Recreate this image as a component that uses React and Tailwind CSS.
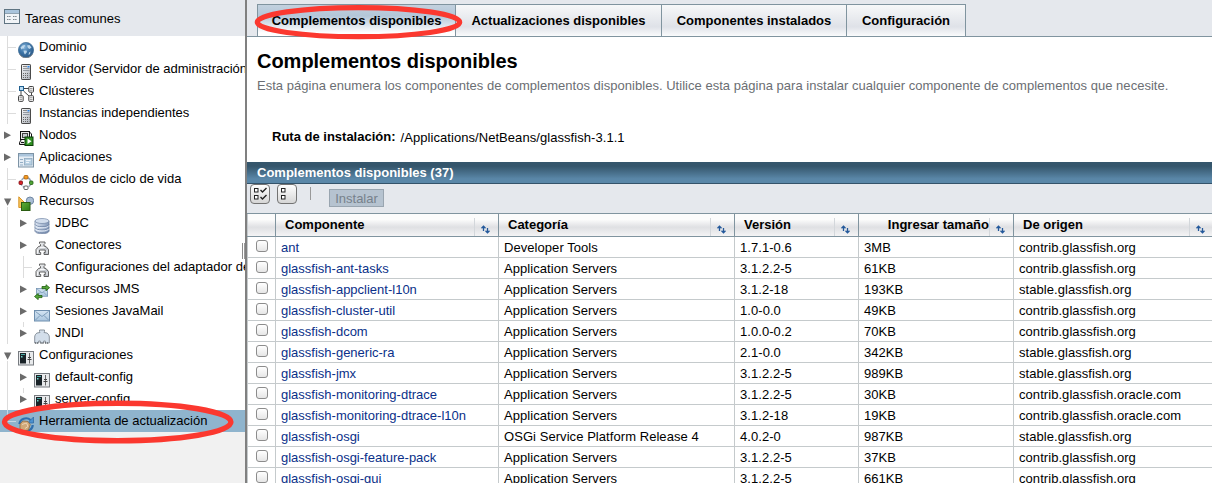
import React from "react";

const Svg = ({ children }) => (
  <svg width="16" height="16" viewBox="0 0 16 16" className="block shrink-0">
    {children}
  </svg>
);

const Gradients = () => (
  <svg width="0" height="0" className="absolute">
    <defs>
      <radialGradient id="globe" cx="0.4" cy="0.3" r="0.75">
        <stop offset="0" stopColor="#7fb0d8" />
        <stop offset="0.5" stopColor="#3f76a8" />
        <stop offset="1" stopColor="#2a5682" />
      </radialGradient>
      <linearGradient id="steel" x1="0" y1="0" x2="1" y2="1">
        <stop offset="0" stopColor="#fafafa" />
        <stop offset="1" stopColor="#a9afb8" />
      </linearGradient>
      <linearGradient id="disk" x1="0" y1="0" x2="1" y2="0">
        <stop offset="0" stopColor="#dfe8f4" />
        <stop offset="1" stopColor="#8297b8" />
      </linearGradient>
      <linearGradient id="mail" x1="0" y1="0" x2="0" y2="1">
        <stop offset="0" stopColor="#d5e5f3" />
        <stop offset="1" stopColor="#a9c5de" />
      </linearGradient>
      <linearGradient id="leaf" x1="0" y1="0" x2="1" y2="1">
        <stop offset="0" stopColor="#5fae38" />
        <stop offset="1" stopColor="#2c7a14" />
      </linearGradient>
    </defs>
  </svg>
);

const WindowIcon = () => (
  <Svg>
    <rect x="0.5" y="0.5" width="15" height="14" fill="#f1f4f7" stroke="#5f7482" />
    <rect x="1" y="1" width="14" height="3" fill="#a9c4dc" />
    <path d="M1 4.5H15" stroke="#8fa3b2" />
    <path d="M3 7.5h4M3 10.5h4M9 7.5h4M9 10.5h4" stroke="#7d8890" strokeDasharray="1.5 0.6" />
  </Svg>
);

const GlobeIcon = () => (
  <Svg>
    <circle cx="8" cy="8" r="7.6" fill="url(#globe)" stroke="#3b6a94" strokeWidth="0.7" />
    <path d="M2.500 5.500l2-2 2-.5 1 1-1.500 1 .5 1.500-2 0-1 1zM9 3.500l2.500-.5 2 2.500-2 1.500-1.500-1zM5.500 8.500l3 0 .5 1.500-2 2.500-1-1.500zM11 10.500l1.500-1-.5 2.500-1.500 1z" fill="#cfe3f2" opacity="0.85" />
    <path d="M1.500 12.200a7.600 7.600 0 0 0 13 0" fill="none" stroke="#777" strokeWidth="0.8" />
  </Svg>
);

const ServerIcon = () => (
  <Svg>
    <rect x="3.500" y="0.500" width="9" height="15" rx="0.600" fill="url(#steel)" stroke="#4a4a4a" />
    <path d="M5 2.500h4" stroke="#888" />
    <rect x="9.500" y="2" width="2" height="1.500" fill="#2f86e8" />
    <path d="M5 4.500h6.500M5 6.500h6.500" stroke="#9298a0" />
    <path d="M5.500 9v5M7.500 9v5M9.500 9v5" stroke="#666" strokeDasharray="1 1" />
    <path d="M11.500 9v5" stroke="#999" strokeDasharray="1 1" />
  </Svg>
);

const ClusterIcon = () => (
  <Svg>
    <path d="M5.500 2.500h5.500M3 5v5M5.500 5l5.500 5M13.500 6.500v3" stroke="#444" fill="none" />
    <rect x="1.500" y="0.500" width="4" height="4" fill="#b9dcf3" stroke="#1f5f8f" />
    <rect x="10.800" y="0.500" width="4.700" height="5.700" rx="0.800" fill="#f3f3f3" stroke="#444" />
    <rect x="0.500" y="9.700" width="4.700" height="5.700" rx="0.800" fill="#f3f3f3" stroke="#444" />
    <rect x="10.800" y="9.700" width="4.700" height="5.700" rx="0.800" fill="#f3f3f3" stroke="#444" />
    <path d="M12 2.500h2.500M12 4.300h2.500M1.600 11.700h2.500M12 11.700h2.500M1.600 13.500h2.500M12 13.500h2.500" stroke="#777" strokeWidth="0.700" />
  </Svg>
);

const NodeIcon = () => (
  <Svg>
    <rect x="2.500" y="1.500" width="9" height="8" fill="#e9e9e9" stroke="#111" />
    <rect x="4.500" y="3.500" width="5" height="4" fill="#c9ccd2" stroke="#444" />
    <path d="M3 10L1.500 12.500V14.500H9" fill="#ddd" stroke="#111" />
    <path d="M11.500 2l2 2v3" fill="none" stroke="#111" />
    <rect x="7" y="7" width="8" height="8.500" fill="#2f8f22" stroke="#0d3f08" />
    <path d="M9.500 8.500v5.500l4-2.750z" fill="#fff" />
    <path d="M3 12.500h3" stroke="#111" />
  </Svg>
);

const AppIcon = () => (
  <Svg>
    <rect x="0.500" y="1.500" width="15" height="13.500" fill="#e4ecf4" stroke="#7d93a5" />
    <rect x="1" y="2" width="14" height="2.500" fill="#abc5dc" />
    <path d="M2 7.500h3M2 10.500h3M2 13h3" stroke="#93aec5" />
    <rect x="6.500" y="6.500" width="7.500" height="6.500" fill="#b8d0e3" stroke="#8faabf" strokeWidth="0.800" />
    <path d="M8 8.500h4.500M8 10.500h3" stroke="#eef4f9" />
  </Svg>
);

const LifecycleIcon = () => (
  <Svg>
    <circle cx="8" cy="8.500" r="5" fill="none" stroke="#93a3b8" strokeWidth="1.600" strokeDasharray="5 1" />
    <rect x="6" y="1.500" width="4" height="3.500" rx="1" fill="#f59a23" stroke="#a85f08" strokeWidth="0.800" />
    <rect x="1" y="7" width="3.500" height="3.500" rx="1" fill="#d8232a" stroke="#7d1014" strokeWidth="0.800" />
    <rect x="11.500" y="7" width="3.500" height="3.500" rx="1" fill="#4fa338" stroke="#22600f" strokeWidth="0.800" />
    <rect x="6" y="12" width="4" height="3.500" rx="1" fill="#fff" stroke="#555" strokeWidth="0.900" />
  </Svg>
);

const ResourcesIcon = () => (
  <Svg>
    <path d="M0.800 0.800L8 8V11.500H0.800z" fill="#f6c45b" stroke="#d9962a" />
    <circle cx="12" cy="4.700" r="3.700" fill="#a9bdd4" stroke="#6f86a3" />
    <rect x="3.500" y="6.500" width="8.500" height="8" fill="url(#leaf)" stroke="#2b5d12" />
  </Svg>
);

const DatabaseIcon = () => (
  <Svg>
    <path d="M1 3v10c0 1.600 3 2.700 7 2.700s7-1.100 7-2.700V3z" fill="url(#disk)" stroke="#65799a" strokeWidth="0.700" />
    <ellipse cx="8" cy="3" rx="7" ry="2.500" fill="#d3deed" stroke="#7488a8" strokeWidth="0.700" />
    <path d="M1 6.500c1 3 13 3 14 0M1 9.700c1 3 13 3 14 0M1 12.500c1 3 13 3 14 0" fill="none" stroke="#6f85a6" strokeWidth="0.900" />
    <path d="M1 7.500c1 3 13 3 14 0M1 10.700c1 3 13 3 14 0" fill="none" stroke="#eef4fc" strokeWidth="0.800" />
  </Svg>
);

const ConnectorIcon = () => (
  <Svg>
    <path d="M6.500 6V4.500L5.500 3.500V2h5.500V3.500L10 4.500V6l2 .5L14.500 9.500V14.500H10V12.500h1.200V10h-5.700v2.500H6.700v2H2V9.500L4.500 6.500z" fill="url(#steel)" stroke="#555" strokeWidth="0.900" />
    <path d="M6 7.500h5M3.500 10v3.500M13 10v3.500" stroke="#fff" strokeWidth="0.800" />
  </Svg>
);

const Envelope = () => (
  <>
    <rect x="0.500" y="4.500" width="15" height="10.500" fill="url(#mail)" stroke="#6f8fae" />
    <path d="M1.500 5.500L8 10.500l6.500-5M1.500 14L6 9.500M14.500 14L10 9.500" fill="none" stroke="#7695b3" strokeWidth="0.900" />
  </>
);

const JmsIcon = () => (
  <Svg>
    <g transform="translate(2 1) scale(0.75)"><Envelope /></g>
    <path d="M8 2.500h4V0.700L15.600 3.700 12 6.700V4.700H8z" fill="#55a63a" stroke="#205e0c" strokeWidth="0.800" />
    <path d="M8 11.500H4.200V9.500L0.500 12.500 4.200 15.600v-2H8z" fill="#55a63a" stroke="#205e0c" strokeWidth="0.800" />
  </Svg>
);

const MailIcon = () => (<Svg><Envelope /></Svg>);

const JndiIcon = () => (
  <Svg>
    <path d="M6 4.500L5.500 3.500V2h5V3.500L10 4.500l3 .5c1.500 1 2.300 2.500 2.300 4V15h-4v-2H9.700v2H6.300v-2H4.700v2H0.700V9c0-1.500.8-3 2.300-4z" fill="#d3deea" stroke="#808a94" strokeWidth="0.900" />
    <path d="M1 15h4M6.500 15h3M11 15h4" stroke="#444" strokeDasharray="1 1" />
  </Svg>
);

const ConfigIcon = () => (
  <Svg>
    <rect x="0.500" y="1.500" width="15" height="13.500" fill="#e8eaec" stroke="#777b80" />
    <rect x="2" y="3" width="6" height="10.500" fill="#1a2328" />
    <path d="M3 4.500h4" stroke="#47a9a3" />
    <rect x="3" y="6" width="1.500" height="1.500" fill="#6dd5cb" />
    <path d="M11.500 3v10.500" stroke="#666" />
    <path d="M9.500 9.500h4M10 7.500h3" stroke="#444" />
  </Svg>
);

const UpdateIcon = () => (
  <Svg>
    <path d="M1.500 8A6.500 6 0 0 1 12.500 4" fill="none" stroke="#2e6fae" strokeWidth="2.200" />
    <path d="M15.500 1V7H9.500z" fill="#4b90cf" stroke="#225b93" strokeWidth="0.600" />
    <path d="M14.700 9A6.500 6 0 0 1 6 14.700" fill="none" stroke="#2e6fae" strokeWidth="2.200" />
    <path d="M2 8l3-3 5 .5 2.200 3-1.700 5.500-4.500 1-4-2z" fill="#d0a878" stroke="#8f6a3f" strokeWidth="0.800" />
    <path d="M4 8.500l4.500-1.500 1.500 3.500-3 2" fill="none" stroke="#ecd5b5" />
  </Svg>
);

const TREE = [
  { t: "Dominio", i: GlobeIcon },
  { t: "servidor (Servidor de administración)", i: ServerIcon },
  { t: "Clústeres", i: ClusterIcon },
  { t: "Instancias independientes", i: ServerIcon },
  { t: "Nodos", i: NodeIcon, a: "r" },
  { t: "Aplicaciones", i: AppIcon, a: "r" },
  { t: "Módulos de ciclo de vida", i: LifecycleIcon },
  { t: "Recursos", i: ResourcesIcon, a: "d" },
  { t: "JDBC", i: DatabaseIcon, a: "r", n: 1 },
  { t: "Conectores", i: ConnectorIcon, a: "r", n: 1 },
  { t: "Configuraciones del adaptador de recursos", i: ConnectorIcon, n: 1 },
  { t: "Recursos JMS", i: JmsIcon, a: "r", n: 1 },
  { t: "Sesiones JavaMail", i: MailIcon, a: "r", n: 1 },
  { t: "JNDI", i: JndiIcon, a: "r", n: 1, stub: 1 },
  { t: "Configuraciones", i: ConfigIcon, a: "d" },
  { t: "default-config", i: ConfigIcon, a: "r", n: 1 },
  { t: "server-config", i: ConfigIcon, a: "r", n: 1, stub: 1 },
  { t: "Herramienta de actualización", i: UpdateIcon, sel: 1 },
];

function Guide({ arrow, stub, last }) {
  return (
    <svg width="16" height="22" viewBox="0 0 16 22" className="block shrink-0">
      {!arrow && <path d={last ? "M7.500 0V11.500H16" : "M7.500 0V22M7.500 11.500H16"} fill="none" stroke={last ? "#c4d8e6" : "#dcdcdc"} />}
      {stub && <path d="M7.500 0V5" stroke="#dcdcdc" />}
      {arrow === "r" && <path d="M4 7.500L11 11.200 4 15z" fill="#6b6b6b" />}
      {arrow === "d" && <path d="M4 8.500H11.300L7.650 15.700z" fill="#6b6b6b" />}
      {arrow === "d" && <path d="M7.500 17V22" stroke="#dcdcdc" />}
    </svg>
  );
}

function TreeRow({ t, i: Icon, a, n, stub, sel }) {
  return (
    <div className={`flex h-[22px] overflow-hidden ${sel ? "bg-[#8fb4cd]" : "bg-white"}`}>
      {n && (
        <svg width="16" height="22" className="block shrink-0">
          <path d="M7.500 0V22" stroke="#dcdcdc" />
        </svg>
      )}
      <Guide arrow={a} stub={stub} last={sel} />
      <div className="shrink-0 pt-1.5 pr-[5px] pl-0.5"><Icon /></div>
      <span className="leading-[22px] whitespace-nowrap">{t}</span>
    </div>
  );
}

const ROWS = [
  ["ant", "Developer Tools", "1.7.1-0.6", "3MB", "contrib.glassfish.org"],
  ["glassfish-ant-tasks", "Application Servers", "3.1.2.2-5", "61KB", "contrib.glassfish.org"],
  ["glassfish-appclient-l10n", "Application Servers", "3.1.2-18", "193KB", "stable.glassfish.org"],
  ["glassfish-cluster-util", "Application Servers", "1.0-0.0", "49KB", "contrib.glassfish.org"],
  ["glassfish-dcom", "Application Servers", "1.0.0-0.2", "70KB", "contrib.glassfish.org"],
  ["glassfish-generic-ra", "Application Servers", "2.1-0.0", "342KB", "stable.glassfish.org"],
  ["glassfish-jmx", "Application Servers", "3.1.2.2-5", "989KB", "stable.glassfish.org"],
  ["glassfish-monitoring-dtrace", "Application Servers", "3.1.2.2-5", "30KB", "contrib.glassfish.oracle.com"],
  ["glassfish-monitoring-dtrace-l10n", "Application Servers", "3.1.2-18", "19KB", "contrib.glassfish.oracle.com"],
  ["glassfish-osgi", "OSGi Service Platform Release 4", "4.0.2-0", "987KB", "stable.glassfish.org"],
  ["glassfish-osgi-feature-pack", "Application Servers", "3.1.2.2-5", "37KB", "contrib.glassfish.org"],
  ["glassfish-osgi-gui", "Application Servers", "3.1.2.2-5", "661KB", "contrib.glassfish.org"],
];

const COLS = "grid grid-cols-[29px_223px_236px_124px_155px_198px]";

const SortIcon = () => (
  <svg width="9" height="9" viewBox="0 0 9 9" className="block">
    <path d="M2.500 1V6M0.500 3.200L2.500 1.200 4.500 3.200M6.500 3V8M4.500 5.800L6.500 7.800 8.500 5.800" fill="none" stroke="#24599b" strokeWidth="1.300" />
  </svg>
);

function HeadCell({ children, right }) {
  return (
    <div className="flex border-r border-[#80949f]">
      <div className={`flex-1 leading-[22px] ${right ? "text-right" : "pl-[9px]"}`}>{children}</div>
      <div className="mt-1 w-6 shrink-0 border-l border-[#d3d7db] pt-[7px] pl-1.5"><SortIcon /></div>
    </div>
  );
}

const TABS = [
  ["Complementos disponibles", "w-[198px]"],
  ["Actualizaciones disponibles", "w-[206px]"],
  ["Componentes instalados", "w-[185px]"],
  ["Configuración", "w-[119px]"],
];

const ToolButton = ({ all }) => (
  <div className="h-5 w-5 rounded-[4px] border border-[#737373] bg-linear-to-b from-white to-[#d6d6d6]">
    <svg width="18" height="18" viewBox="0 0 18 18" className="block">
      <rect x="3.500" y="3.500" width="3.500" height="3.500" fill="#fff" stroke="#222" />
      <rect x="3.500" y="10.500" width="3.500" height="3.500" fill="#fff" stroke="#222" />
      {all && <path d="M9.500 5l2 2 4-4M9.500 12l2 2 4-4" fill="none" stroke="#222" strokeWidth="1.400" />}
    </svg>
  </div>
);

export default function App() {
  return (
    <div className="relative flex h-[483px] w-[1212px] overflow-hidden bg-white font-['Liberation_Sans',Arial,sans-serif] text-[13px] text-black">
      <Gradients />
      <aside className="w-[245px] shrink-0 overflow-hidden bg-[#f1f1f1]">
        <div className="flex h-9 bg-[#e5e8ed] pt-[9px] pl-1">
          <WindowIcon />
          <span className="pl-[5px] leading-[19px]">Tareas comunes</span>
        </div>
        {TREE.map((r) => <TreeRow key={r.t} {...r} />)}
      </aside>
      <div className="w-0.5 shrink-0 bg-[#808080]" />
      <div className="absolute top-[243px] left-[242px] flex h-4 gap-px bg-white">
        <div className="w-px bg-[#8b8b8b]" />
        <div className="w-px bg-[#999]" />
      </div>

      <main className="w-[965px] shrink-0 overflow-hidden">
        <div className="flex h-[37px] border-b border-[#80949f] bg-[#e5e8ed] pt-1 pl-2.5">
          <nav className="flex border-t border-l border-[#80949f] font-bold">
            {TABS.map(([t, w], k) => (
              <div
                key={t}
                className={`${w} border-r border-[#80949f] text-center leading-[31px] whitespace-nowrap ${
                  k === 0
                    ? "bg-linear-to-b from-[#c3d1de] via-[#b3c6d8] via-35% to-white to-90%"
                    : "bg-linear-to-b from-[#f7f8f9] via-[#dfe2e8] via-70% to-[#fafbfc]"
                }`}
              >
                {t}
              </div>
            ))}
          </nav>
        </div>

        <h1 className="mt-3 pl-2.5 text-[20px] leading-6 font-bold tracking-[-0.02px]">Complementos disponibles</h1>
        <p className="pt-1 pl-2.5 leading-[18px] tracking-[0.025px] whitespace-nowrap text-[#6b6e73]">
          Esta página enumera los componentes de complementos disponibles. Utilice esta página para instalar cualquier componente de complementos que necesite.
        </p>
        <div className="flex h-[67px] gap-[5px] pt-[33px] pl-[25px] leading-[18px]">
          <b>Ruta de instalación:</b>
          <span className="pt-px tracking-[0.06px]">/Applications/NetBeans/glassfish-3.1.1</span>
        </div>

        <div className="h-[22px] border-b border-[#34536a] bg-linear-to-b from-[#35566c] from-20% to-[#5a87a8] to-80% pl-2.5 leading-[21px] font-bold text-white">
          Complementos disponibles (37)
        </div>
        <div className="flex h-[29px] bg-[#e5e8ed] pl-[3px]">
          <ToolButton all />
          <div className="pl-[7px]"><ToolButton /></div>
          <div className="mt-[3px] ml-[13px] h-[13px] w-px bg-[#999]" />
          <div className="mt-[5px] ml-[18px] h-[18px] w-[55px] border border-[#99a5b0] bg-[#b6c3d0] text-center leading-[17px] text-[#76818b]">Instalar</div>
        </div>

        <div className={`${COLS} h-6 border-y border-[#80949f] bg-linear-to-b from-[#fcfcfc] from-25% via-[#dfe0e3] via-60% to-[#f4f4f5] font-bold`}>
          <div className="border-r border-l border-r-[#80949f] border-l-[#c4cacd]" />
          <HeadCell>Componente</HeadCell>
          <HeadCell>Categoría</HeadCell>
          <HeadCell>Versión</HeadCell>
          <HeadCell right>Ingresar tamaño</HeadCell>
          <div className="flex">
            <div className="w-[175px] pl-[9px] leading-[22px]">De origen</div>
            <div className="mt-1 border-l border-[#d3d7db] pt-[7px] pl-1.5"><SortIcon /></div>
          </div>
        </div>
        {ROWS.map((r) => (
          <div key={r[0]} className={`${COLS} h-[21px] border-b border-[#c5cacc] leading-[22px]`}>
            <div className="h-5 border-x border-[#c5cacc] pt-[3px] pl-2">
              <div className="h-3 w-3 rounded-[3px] border border-[#8c8c8c] bg-linear-to-b from-white to-[#e6e6e6]" />
            </div>
            {r.map((c, k) => (
              <div key={k} className={`h-5 pl-[5px] whitespace-nowrap ${k === 0 ? "text-[#0a3089]" : "tracking-[0.06px]"} ${k < 4 ? "border-r border-[#c5cacc]" : ""}`}>
                {c}
              </div>
            ))}
          </div>
        ))}
      </main>

      <svg width="1212" height="483" className="pointer-events-none absolute top-0 left-0">
        <ellipse cx="358.500" cy="22.200" rx="101.200" ry="14.500" fill="none" stroke="#fb382f" strokeWidth="5.200" />
        <ellipse cx="117.700" cy="422" rx="113.200" ry="18.700" fill="none" stroke="#fb382f" strokeWidth="5.400" />
      </svg>
    </div>
  );
}
